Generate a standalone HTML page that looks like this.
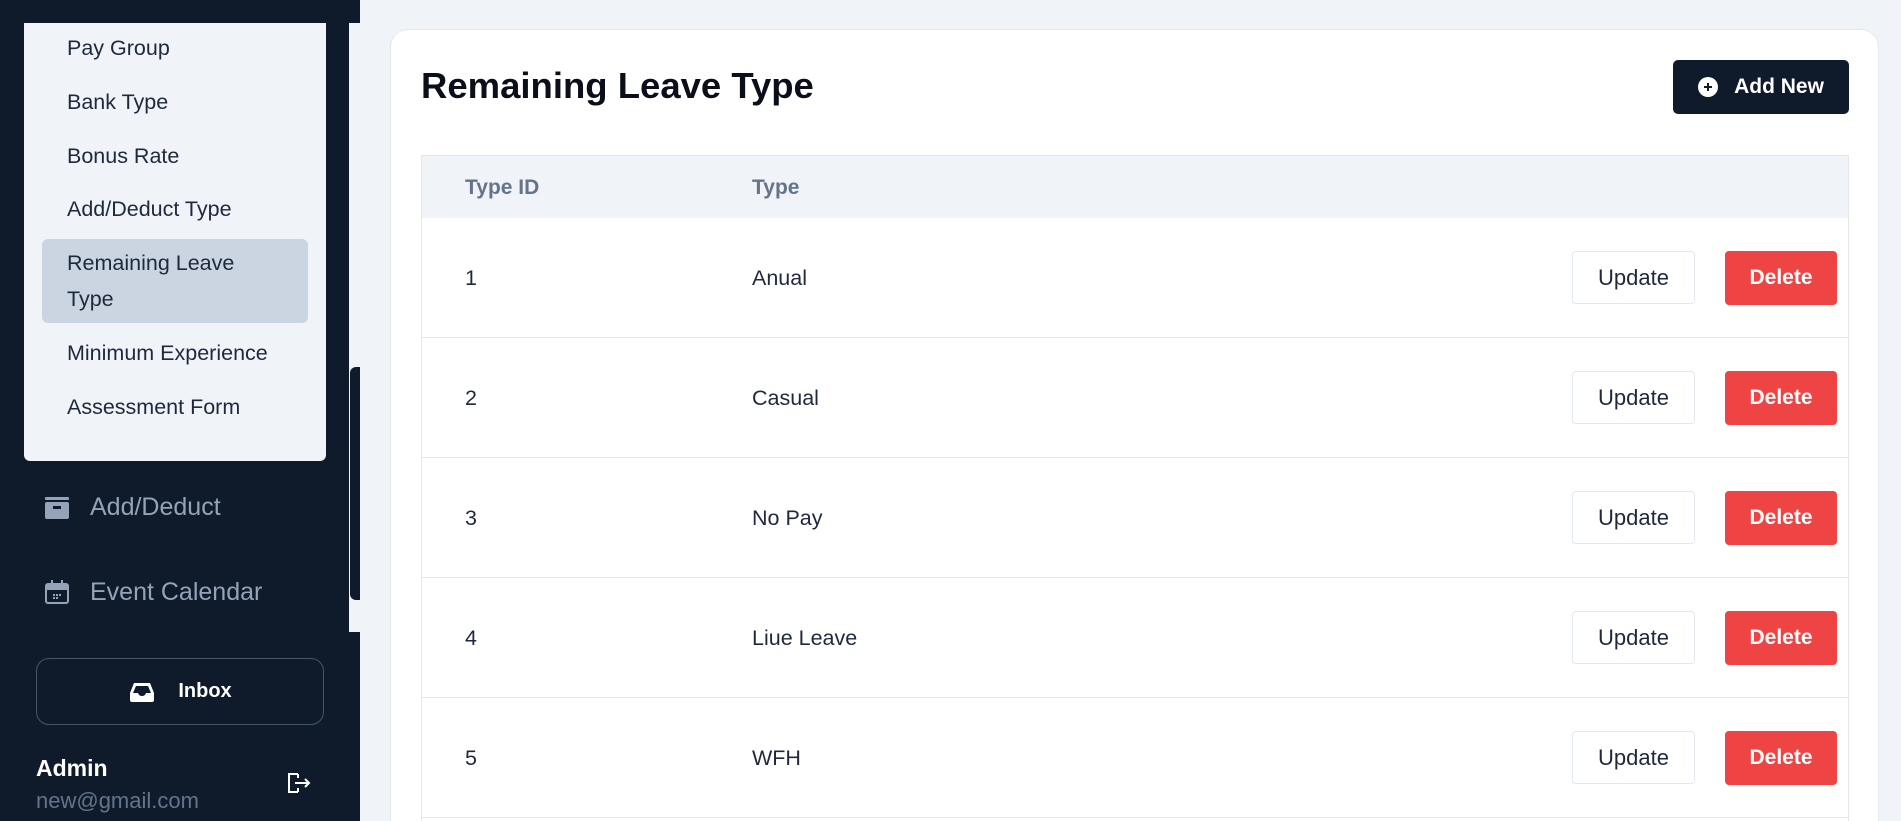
<!DOCTYPE html>
<html><head><meta charset="utf-8"><style>
*{margin:0;padding:0;box-sizing:border-box}
html,body{width:1901px;height:821px;overflow:hidden}
body{background:#f0f3f8;font-family:"Liberation Sans",sans-serif}
#w{position:relative;width:1901px;height:821px;overflow:hidden}
.sb{position:absolute;left:0;top:0;width:360px;height:821px;background:#0f1b2b}
.strip{position:absolute;left:349px;top:23px;width:11px;height:609px;background:#f0f3f8}
.thumb{position:absolute;left:350px;top:367px;width:10px;height:233px;background:#0f1b2b;border-radius:6px 0 0 6px}
.panel{position:absolute;left:24px;top:23px;width:302px;height:438px;background:#f0f3f8;border-radius:0 0 6px 6px}
.mi{position:absolute;left:67px;font-size:21.5px;color:#1e293b}
.hl{position:absolute;left:42px;top:239px;width:266px;height:84px;background:#cbd5e1;border-radius:6px}
.nav{position:absolute;left:90px;font-size:25px;color:#94a3b8}
.inbox{position:absolute;left:36px;top:658px;width:288px;height:67px;border:1px solid #475569;border-radius:13px;color:#fff;font-weight:bold;font-size:20px;display:flex;align-items:center;justify-content:center;gap:22px}
.card{position:absolute;left:390px;top:29px;width:1489px;height:792px;background:#fff;border:1px solid #e5e7eb;border-bottom:none;border-radius:18px 18px 0 0}
h1{position:absolute;left:421px;top:65px;font-size:36.5px;font-weight:bold;color:#0a0f1a}
.add{position:absolute;left:1673px;top:60px;width:176px;height:54px;background:#0f1b2b;border-radius:5px;color:#fff;font-size:21px;font-weight:bold;display:flex;align-items:center;justify-content:center;gap:16px}
.tbl{position:absolute;left:421px;top:155px;width:1428px;height:666px;border:1px solid #e5e7eb;border-bottom:none}
.th{position:absolute;left:0;top:0;width:1426px;height:62px;background:#f0f3f8;color:#64748b;font-size:21px;font-weight:bold}
.row{position:absolute;left:0;width:1426px;height:120px;border-bottom:1px solid #e5e7eb;font-size:21.5px;color:#1e293b}
.c1{position:absolute;left:43px}.c2{position:absolute;left:330px}
.up{position:absolute;left:1150px;width:123px;height:53px;border:1px solid #e2e8f0;border-radius:4px;background:#fff;display:flex;align-items:center;justify-content:center;font-size:22px;color:#1e293b}
.del{position:absolute;left:1303px;width:112px;height:54px;background:#ef4444;border-radius:4px;display:flex;align-items:center;justify-content:center;font-size:21px;color:#fff;font-weight:bold}
</style></head><body><div id="w">
<div class="sb"></div>
<div class="strip"></div><div class="thumb"></div>
<div class="panel"></div>
<div class="hl"></div>
<div class="mi" style="top:36px">Pay Group</div>
<div class="mi" style="top:90px">Bank Type</div>
<div class="mi" style="top:144px">Bonus Rate</div>
<div class="mi" style="top:197px">Add/Deduct Type</div>
<div class="mi" style="top:245px;line-height:36px">Remaining Leave<br>Type</div>
<div class="mi" style="top:341px">Minimum Experience</div>
<div class="mi" style="top:395px">Assessment Form</div>
<svg style="position:absolute;left:45px;top:497px" width="24" height="22"><rect x="0" y="0" width="24" height="3" rx="1" fill="#94a3b8"/><rect x="0" y="5" width="24" height="17" rx="2" fill="#94a3b8"/><rect x="8" y="9" width="8" height="3" fill="#0f1b2b"/></svg>
<div class="nav" style="top:493px">Add/Deduct</div>
<svg style="position:absolute;left:45px;top:580px" width="24" height="24"><rect x="1" y="4" width="22" height="19" rx="2" fill="none" stroke="#94a3b8" stroke-width="2"/><rect x="1" y="4" width="22" height="6" fill="#94a3b8"/><rect x="6" y="0" width="2" height="5" fill="#94a3b8"/><rect x="16" y="0" width="2" height="5" fill="#94a3b8"/><g fill="#94a3b8"><rect x="8" y="14" width="2" height="2"/><rect x="11" y="14" width="2" height="2"/><rect x="14" y="14" width="2" height="2"/><rect x="8" y="17" width="2" height="2"/><rect x="11" y="17" width="2" height="2"/></g></svg>
<div class="nav" style="top:578px">Event Calendar</div>
<div class="inbox"><svg width="28" height="22"><path d="M2 12 L6 2 H22 L26 12 V19 Q26 21 24 21 H4 Q2 21 2 19 Z" fill="#fff"/><path d="M5 12 L8 5 H20 L23 12 H18 Q17 15 14 15 Q11 15 10 12 Z" fill="#0f1b2b"/></svg><span>Inbox</span></div>
<div style="position:absolute;left:36px;top:755px;font-size:23px;font-weight:bold;color:#fff">Admin</div>
<div style="position:absolute;left:36px;top:788px;font-size:22px;color:#64748b">new@gmail.com</div>
<svg style="position:absolute;left:286px;top:771px" width="26" height="24" fill="none" stroke="#fff" stroke-width="2"><path d="M12 3 H3 V21 H12"/><path d="M12 3 V7 M12 21 V17"/><path d="M9 12 H23 M19 8 L23 12 L19 16"/></svg>
<div class="card"></div>
<h1>Remaining Leave Type</h1>
<div class="add"><svg width="20" height="20"><circle cx="10" cy="10" r="10" fill="#fff"/><path d="M10 6 V14 M6 10 H14" stroke="#0f1b2b" stroke-width="2"/></svg><span>Add New</span></div>
<div class="tbl">
<div class="th"><span class="c1" style="top:20px">Type ID</span><span class="c2" style="top:20px">Type</span></div>
<div class="row" style="top:62px"><span class="c1" style="top:48px">1</span><span class="c2" style="top:48px">Anual</span><div class="up" style="top:33px">Update</div><div class="del" style="top:33px">Delete</div></div>
<div class="row" style="top:182px"><span class="c1" style="top:48px">2</span><span class="c2" style="top:48px">Casual</span><div class="up" style="top:33px">Update</div><div class="del" style="top:33px">Delete</div></div>
<div class="row" style="top:302px"><span class="c1" style="top:48px">3</span><span class="c2" style="top:48px">No Pay</span><div class="up" style="top:33px">Update</div><div class="del" style="top:33px">Delete</div></div>
<div class="row" style="top:422px"><span class="c1" style="top:48px">4</span><span class="c2" style="top:48px">Liue Leave</span><div class="up" style="top:33px">Update</div><div class="del" style="top:33px">Delete</div></div>
<div class="row" style="top:542px"><span class="c1" style="top:48px">5</span><span class="c2" style="top:48px">WFH</span><div class="up" style="top:33px">Update</div><div class="del" style="top:33px">Delete</div></div>
</div>
</div></body></html>
